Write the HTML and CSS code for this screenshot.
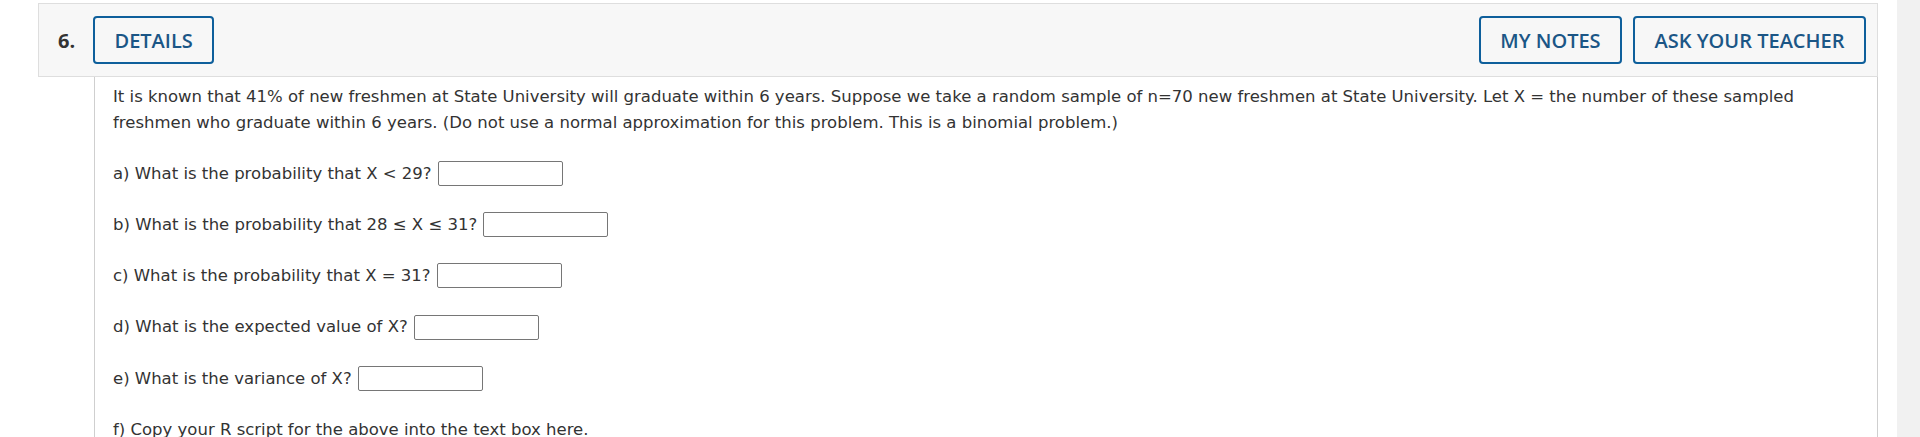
FILE: index.html
```html
<!DOCTYPE html>
<html lang="en">
<head>
<meta charset="utf-8">
<title>Question 6</title>
<link rel="stylesheet" href="styles.css">
</head>
<body>
<div class="page">
  <main class="main">
    <section class="question">
      <header class="q-head">
        <span class="q-num">6.</span>
        <button class="btn">DETAILS</button>
        <div class="spacer"></div>
        <div class="actions">
          <button class="btn">MY NOTES</button>
          <button class="btn">ASK YOUR TEACHER</button>
        </div>
      </header>
      <div class="q-body">
        <p class="intro">It is known that 41% of new freshmen at State University will graduate within 6 years. Suppose we take a random sample of n=70 new freshmen at State University. Let X = the number of these sampled freshmen who graduate within 6 years. (Do not use a normal approximation for this problem. This is a binomial problem.)</p>
        <div class="part"><span>a) What is the probability that X &lt; 29?</span><span class="answer"></span></div>
        <div class="part"><span>b) What is the probability that 28 &le; X &le; 31?</span><span class="answer"></span></div>
        <div class="part"><span>c) What is the probability that X = 31?</span><span class="answer"></span></div>
        <div class="part"><span>d) What is the expected value of X?</span><span class="answer"></span></div>
        <div class="part"><span>e) What is the variance of X?</span><span class="answer"></span></div>
        <div class="part"><span>f) Copy your R script for the above into the text box here.</span></div>
      </div>
    </section>
  </main>
  <div class="scrollbar"></div>
</div>
</body>
</html>
```

FILE: styles.css
```css
html, body {
  margin: 0;
  padding: 0;
  background: #ffffff;
}

.page {
  display: flex;
  width: 1920px;
  height: 437px;
  overflow: hidden;
}

.main {
  flex: 1;
  padding: 3px 19px 0 38px;
}

.scrollbar {
  width: 23px;
  background: #f1f1f1;
}

.question {
  display: flex;
  flex-direction: column;
}

.q-head {
  display: flex;
  align-items: center;
  box-sizing: border-box;
  height: 74px;
  padding: 0 11px 0 19px;
  background: #f7f7f7;
  border: 1px solid #dedede;
}

.q-num {
  font-family: "Open Sans", sans-serif;
  font-weight: 700;
  font-size: 20px;
  color: #333333;
  width: 35px;
}

.spacer {
  flex: 1;
}

.actions {
  display: flex;
  gap: 11px;
}

.btn {
  box-sizing: border-box;
  height: 48px;
  padding: 0 19.5px;
  background: #f7f7f7;
  border: 2px solid #0e5f9b;
  border-radius: 4px;
  font-family: "Open Sans", sans-serif;
  font-weight: 600;
  font-size: 20px;
  color: #1b5686;
  letter-spacing: 0;
}

.q-body {
  margin-left: 56px;
  padding: 7px 40px 20px 18px;
  border-left: 1px solid #cfcfcf;
  border-right: 1px solid #cfcfcf;
  font-family: "DejaVu Sans", Verdana, sans-serif;
  font-size: 16.5px;
  line-height: 25.6px;
  color: #333333;
  height: 400px;
}

.intro {
  margin: 0;
}

.part {
  display: flex;
  align-items: center;
  gap: 6px;
  height: 25.6px;
  margin-top: 25.6px;
  white-space: nowrap;
}

.answer {
  display: inline-block;
  box-sizing: border-box;
  width: 125px;
  height: 25px;
  border: 1px solid #767676;
  border-radius: 2px;
  background: #ffffff;
}
```
